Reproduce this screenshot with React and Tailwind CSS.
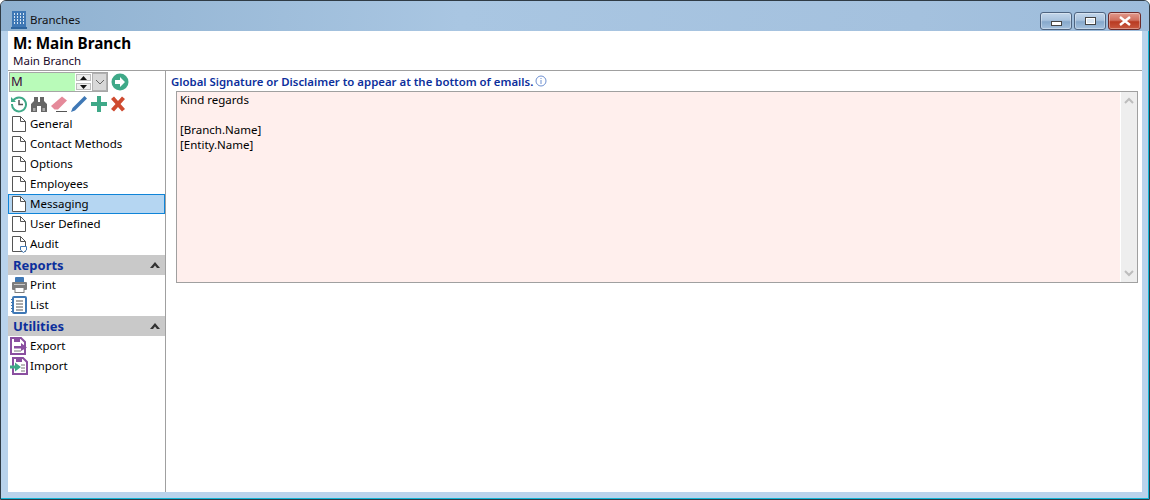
const font = { fontFamily: '"Noto Sans", "Open Sans", sans-serif' };

const PageIcon = ({ shield }) => (
  <svg width="16" height="18" viewBox="0 0 16 18" className="shrink-0">
    <path d="M1.5 1.5H9.5L14.5 6.5V16.5H1.5Z" fill="#fff" stroke="#555" />
    <path d="M9.5 1.5V6.5H14.5" fill="none" stroke="#555" />
    {shield && (
      <path d="M9.5 11.5H15.5V15L12.5 17.5L9.5 15Z" fill="#fff" stroke="#3f78b5" />
    )}
  </svg>
);

const PrintIcon = () => (
  <svg width="17" height="18" viewBox="0 0 17 18" className="shrink-0">
    <rect x="4" y="1" width="9" height="6" rx="1" fill="#3f78b5" />
    <rect x="1" y="6" width="15" height="8" rx="1" fill="#7d7d7d" />
    <rect x="3" y="8" width="11" height="1" fill="#c9c9c9" />
    <rect x="4" y="11.5" width="9" height="5" fill="#fff" stroke="#7d7d7d" />
  </svg>
);

const ListIcon = () => (
  <svg width="16" height="18" viewBox="0 0 16 18" className="shrink-0">
    <rect x="2" y="1" width="13" height="16" rx="1" fill="#fff" stroke="#3f78b5" strokeWidth="2" />
    <path d="M5 5H12M5 8H12M5 11H12M5 14H12" stroke="#555" />
    <path d="M0 3.5H2M0 6.5H2M0 9.5H2M0 12.5H2M0 15.5H2" stroke="#3f78b5" />
  </svg>
);

const ExportIcon = () => (
  <svg width="18" height="18" viewBox="0 0 18 18" className="shrink-0">
    <path d="M1 1H11L15 5V17H1Z" fill="#fff" stroke="#8a4fa0" strokeWidth="2" />
    <rect x="4" y="1" width="6" height="4" fill="#8a4fa0" />
    <path d="M4 14H11" stroke="#777" />
    <path d="M4 9H11V6L17 10.5L11 14V11.5H4Z" fill="#8a4fa0" />
  </svg>
);

const ImportIcon = () => (
  <svg width="18" height="18" viewBox="0 0 18 18" className="shrink-0">
    <path d="M3 1H13L17 5V17H3Z" fill="#fff" stroke="#8a4fa0" strokeWidth="2" />
    <rect x="6" y="1" width="6" height="4" fill="#8a4fa0" />
    <path d="M11 8H15M11 11H15M11 14H15" stroke="#777" />
    <path d="M0 8.5H5V5.5L11 10L5 14.5V11.5H0Z" fill="#3fa988" />
  </svg>
);

const Row = ({ icon, label, selected }) => (
  <div
    className={`flex h-5 items-center gap-[2px] pl-[2px] text-[11.5px] text-black ${
      selected ? "bg-[#b5d6f2] outline outline-1 -outline-offset-1 outline-[#0f84d8]" : ""
    }`}
  >
    <span className="flex w-[18px] justify-center">{icon}</span>
    <span>{label}</span>
  </div>
);

const Section = ({ title }) => (
  <div className="flex h-5 items-center justify-between bg-[#c9c9c9] pl-[5px] pr-[4px]">
    <span className="pt-[2px] text-[13px] font-bold text-[#0c2f9c]">{title}</span>
    <svg width="12" height="8" viewBox="0 0 12 8">
      <path d="M1 7L6 1L11 7H8L6 4.5L4 7Z" fill="#333" />
    </svg>
  </div>
);

const WinButton = ({ children, close }) => (
  <div
    className={`flex h-[18px] items-center justify-center rounded-[3px] border shadow-[inset_0_0_0_1px_rgba(255,255,255,0.35)] ${
      close
        ? "w-[33px] border-[#6b2a2a] bg-[linear-gradient(#e2998c,#d0705f_45%,#b93b22_55%,#c9583f)]"
        : "w-[32px] border-[#4e6480] bg-[linear-gradient(#c3d6ea,#a9c3de_45%,#86a8cb_55%,#a5c1de)]"
    }`}
  >
    {children}
  </div>
);

const ToolIcons = () => (
  <div className="mt-[2px] flex h-[19px] items-center gap-[2px] pl-[2px]">
    {/* history */}
    <svg width="18" height="18" viewBox="0 0 18 18">
      <path d="M3.2 5.5A7 7 0 1 1 2 9" fill="none" stroke="#3fa988" strokeWidth="2" />
      <path d="M1 2V7H6Z" fill="#3fa988" />
      <path d="M9 5V9.5H13" fill="none" stroke="#555" strokeWidth="1.5" />
    </svg>
    {/* binoculars */}
    <svg width="18" height="18" viewBox="0 0 18 18">
      <path d="M4 2H8V7H10V2H14V6L17 9V17H11V11H7V17H1V9L4 6Z" fill="#666" />
      <path d="M3 13H5.5V16H3ZM12.5 13H15V16H12.5Z" fill="#aaa" />
    </svg>
    {/* eraser */}
    <svg width="18" height="18" viewBox="0 0 18 18">
      <path d="M12 1.5L17 5.5L8 14.5H4.5L1 11Z" fill="#e58a9a" />
      <path d="M6 16.5H17" stroke="#555" />
    </svg>
    {/* pencil */}
    <svg width="18" height="18" viewBox="0 0 18 18">
      <path d="M14.5 1L17 3.5L5 15.5L1 17L2.5 13Z" fill="#3f78b5" />
    </svg>
    {/* add */}
    <svg width="18" height="18" viewBox="0 0 18 18">
      <path d="M7 1H11V7H17V11H11V17H7V11H1V7H7Z" fill="#3fa988" />
    </svg>
    {/* delete */}
    <svg width="16" height="18" viewBox="0 0 16 18">
      <path d="M1 4L4 1.5L8 6L12 1.5L15 4L10.5 9L15 14L12 16.5L8 12L4 16.5L1 14L5.5 9Z" fill="#cf4b30" />
    </svg>
  </div>
);

const SearchBar = () => (
  <div className="ml-[1px] flex items-center">
    <div className="flex h-[20px] w-[99px] border border-[#a6a6a6]">
      <span className="flex-1 bg-[#b9fbb9] pl-[1px] text-[13px] leading-[17px] text-[#3a0a3a]">M</span>
      <div className="flex w-[17px] flex-col justify-between bg-white px-[1px] py-[1px]">
        <div className="flex h-[7px] items-center justify-center border border-[#bdbdbd] bg-[#eeeeee]">
          <svg width="7" height="4" viewBox="0 0 7 4"><path d="M0 4L3.5 0L7 4Z" fill="#111" /></svg>
        </div>
        <div className="flex h-[7px] items-center justify-center border border-[#bdbdbd] bg-[#eeeeee]">
          <svg width="7" height="4" viewBox="0 0 7 4"><path d="M0 0L3.5 4L7 0Z" fill="#111" /></svg>
        </div>
      </div>
      <div className="flex w-[15px] items-center justify-center border border-[#b0b0b0] bg-[#d8d8d8]">
        <svg width="10" height="6" viewBox="0 0 10 6"><path d="M1 1L5 5L9 1" fill="none" stroke="#666" /></svg>
      </div>
    </div>
    <svg width="18" height="18" viewBox="0 0 18 18" className="ml-[3px]">
      <circle cx="9" cy="9" r="8.5" fill="#3fa988" />
      <path d="M4 7H9V4L14 9L9 14V11H4Z" fill="#fff" />
    </svg>
  </div>
);

export default function App() {
  return (
    <div
      className="flex h-[500px] w-[1150px] flex-col overflow-hidden rounded-t-[6px] border border-[#2f3b45] bg-[#b9d3ec] shadow-[inset_-1px_-1px_0_#12b5d6]"
      style={font}
    >
      <div className="flex h-[30px] shrink-0 items-center justify-between bg-[linear-gradient(90deg,#8fb1d0,#a9c6e2_40%,#a4c1de_80%,#9dbcdb)] pl-[10px] pr-[8px]">
        <div className="flex items-center gap-[3px] pt-[7px]">
          <svg width="16" height="18" viewBox="0 0 16 18">
            <rect x="1" y="0" width="14" height="17" fill="#3f78b5" />
            <path d="M3.5 2V14M6.5 2V14M9.5 2V14M12.5 2V14" stroke="#d5e4f2" strokeDasharray="2 1" />
            <rect x="0" y="16" width="16" height="2" fill="#2f66a0" />
          </svg>
          <span className="text-[11.5px] text-[#111]">Branches</span>
        </div>
        <div className="mt-[9px] flex gap-[2px]">
          <WinButton>
            <div className="mt-[5px] h-[5px] w-[11px] border border-[#444] bg-white" />
          </WinButton>
          <WinButton>
            <div className="h-[8px] w-[11px] border border-[#444] bg-[#dbe7f3] shadow-[inset_0_0_0_1px_#fff]" />
          </WinButton>
          <WinButton close>
            <svg width="12" height="10" viewBox="0 0 12 10">
              <path d="M1 1L11 9M11 1L1 9" stroke="#fff" strokeWidth="2.4" />
            </svg>
          </WinButton>
        </div>
      </div>

      <div className="mx-[7px] mb-[7px] flex min-h-0 flex-1 flex-col bg-white">
        <div className="h-[40px] shrink-0 border-b border-[#a0a0a0] pl-[5px]">
          <div className="pt-[2px] text-[15.25px] font-bold leading-[20px] text-black">M: Main Branch</div>
          <div className="text-[11.5px] leading-[16px] text-[#1b0a2a]">Main Branch</div>
        </div>

        <div className="flex min-h-0 flex-1">
          <aside className="w-[158px] shrink-0 border-r border-[#a0a0a0] pt-[1px]">
            <SearchBar />
            <ToolIcons />
            <div className="mt-[1px]">
              <Row icon={<PageIcon />} label="General" />
              <Row icon={<PageIcon />} label="Contact Methods" />
              <Row icon={<PageIcon />} label="Options" />
              <Row icon={<PageIcon />} label="Employees" />
              <Row icon={<PageIcon />} label="Messaging" selected />
              <Row icon={<PageIcon />} label="User Defined" />
              <Row icon={<PageIcon shield />} label="Audit" />
            </div>
            <div className="mt-[1px]">
              <Section title="Reports" />
              <Row icon={<PrintIcon />} label="Print" />
              <Row icon={<ListIcon />} label="List" />
            </div>
            <div className="mt-[1px]">
              <Section title="Utilities" />
              <Row icon={<ExportIcon />} label="Export" />
              <Row icon={<ImportIcon />} label="Import" />
            </div>
          </aside>

          <main className="flex-1 pl-[5px] pr-[4px]">
            <div className="flex h-[20px] items-center gap-[2px] pt-[2px]">
              <span className="text-[11.4px] font-semibold text-[#0c2f9c]">
                Global Signature or Disclaimer to appear at the bottom of emails.
              </span>
              <svg width="12" height="12" viewBox="0 0 12 12" className="mb-[3px]">
                <circle cx="6" cy="6" r="5" fill="#fff" stroke="#6d8fd0" />
                <path d="M6 5V9M6 3V4" stroke="#6d8fd0" />
              </svg>
            </div>
            <div className="ml-[5px] flex h-[192px] border border-[#a0a0a0]">
              <div className="flex-1 bg-[#ffefed] pl-[3px] text-[11.5px] leading-[15px] text-black">
                <div>Kind regards</div>
                <div className="h-[15px]" />
                <div>[Branch.Name]</div>
                <div>[Entity.Name]</div>
              </div>
              <div className="flex w-[17px] flex-col items-center justify-between border-l border-white bg-[#eeeeee] py-[5px]">
                <svg width="10" height="7" viewBox="0 0 10 7"><path d="M1 6L5 2L9 6" fill="none" stroke="#bdbdbd" strokeWidth="2" /></svg>
                <svg width="10" height="7" viewBox="0 0 10 7"><path d="M1 1L5 5L9 1" fill="none" stroke="#bdbdbd" strokeWidth="2" /></svg>
              </div>
            </div>
          </main>
        </div>
      </div>
    </div>
  );
}
